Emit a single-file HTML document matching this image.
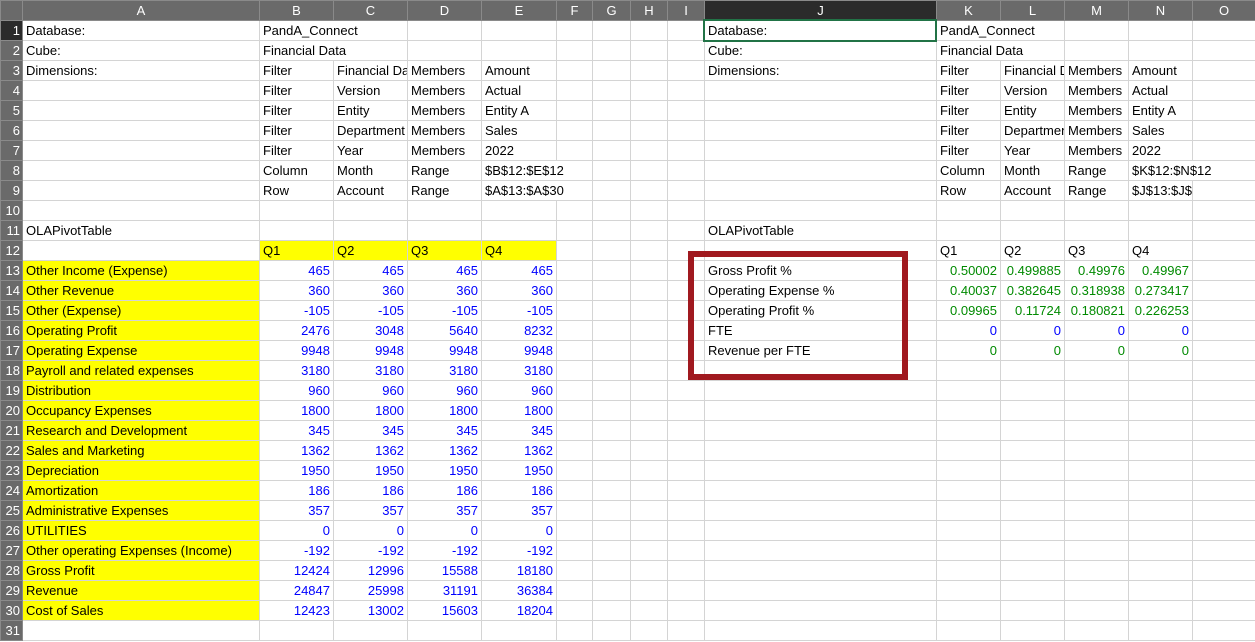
<!DOCTYPE html><html><head><meta charset="utf-8"><style>
body{margin:0;width:1255px;height:642px;overflow:hidden;background:#fff;font-family:"Liberation Sans",sans-serif;font-size:13px;position:relative}
table{border-collapse:collapse;table-layout:fixed;position:absolute;left:0;top:0;width:1255px}
td{height:19px;padding:0 3px;border:1px solid #d4d4d4;white-space:nowrap;overflow:hidden;color:#000;line-height:19px;text-overflow:clip}
tr.h td{background:#6a6a6a;color:#fff;text-align:center;border-color:#8a8a8a}
td.r{background:#6a6a6a;color:#fff;text-align:right;padding:0 2px 0 0;border-color:#8a8a8a}
td.sel{background:#2b2b2b!important}
.y{background:#ffff00}
.n{text-align:right;color:#0000ff}
.g{text-align:right;color:#008a00}
#box{position:absolute;left:688px;top:251px;width:208px;height:117px;border:6px solid #a0191f}
#cur{position:absolute;left:703px;top:19px;width:230px;height:19px;border:2px solid #217346}
</style></head><body>
<table>
<colgroup><col style="width:22px"><col style="width:237px"><col style="width:74px"><col style="width:74px"><col style="width:74px"><col style="width:75px"><col style="width:36px"><col style="width:38px"><col style="width:37px"><col style="width:37px"><col style="width:232px"><col style="width:64px"><col style="width:64px"><col style="width:64px"><col style="width:64px"><col style="width:63px"></colgroup>
<tr class="h"><td></td><td>A</td><td>B</td><td>C</td><td>D</td><td>E</td><td>F</td><td>G</td><td>H</td><td>I</td><td class="sel">J</td><td>K</td><td>L</td><td>M</td><td>N</td><td>O</td></tr>
<tr><td class="r sel">1</td><td>Database:</td><td colspan="2">PandA_Connect</td><td></td><td></td><td></td><td></td><td></td><td></td><td>Database:</td><td colspan="2">PandA_Connect</td><td></td><td></td><td></td></tr>
<tr><td class="r">2</td><td>Cube:</td><td colspan="2">Financial Data</td><td></td><td></td><td></td><td></td><td></td><td></td><td>Cube:</td><td colspan="2">Financial Data</td><td></td><td></td><td></td></tr>
<tr><td class="r">3</td><td>Dimensions:</td><td>Filter</td><td>Financial Data</td><td>Members</td><td>Amount</td><td></td><td></td><td></td><td></td><td>Dimensions:</td><td>Filter</td><td>Financial Data</td><td>Members</td><td>Amount</td><td></td></tr>
<tr><td class="r">4</td><td></td><td>Filter</td><td>Version</td><td>Members</td><td>Actual</td><td></td><td></td><td></td><td></td><td></td><td>Filter</td><td>Version</td><td>Members</td><td>Actual</td><td></td></tr>
<tr><td class="r">5</td><td></td><td>Filter</td><td>Entity</td><td>Members</td><td>Entity A</td><td></td><td></td><td></td><td></td><td></td><td>Filter</td><td>Entity</td><td>Members</td><td>Entity A</td><td></td></tr>
<tr><td class="r">6</td><td></td><td>Filter</td><td>Department</td><td>Members</td><td>Sales</td><td></td><td></td><td></td><td></td><td></td><td>Filter</td><td>Department</td><td>Members</td><td>Sales</td><td></td></tr>
<tr><td class="r">7</td><td></td><td>Filter</td><td>Year</td><td>Members</td><td>2022</td><td></td><td></td><td></td><td></td><td></td><td>Filter</td><td>Year</td><td>Members</td><td>2022</td><td></td></tr>
<tr><td class="r">8</td><td></td><td>Column</td><td>Month</td><td>Range</td><td colspan="2">$B$12:$E$12</td><td></td><td></td><td></td><td></td><td>Column</td><td>Month</td><td>Range</td><td colspan="2">$K$12:$N$12</td></tr>
<tr><td class="r">9</td><td></td><td>Row</td><td>Account</td><td>Range</td><td colspan="2">$A$13:$A$30</td><td></td><td></td><td></td><td></td><td>Row</td><td>Account</td><td>Range</td><td>$J$13:$J$17</td><td></td></tr>
<tr><td class="r">10</td><td></td><td></td><td></td><td></td><td></td><td></td><td></td><td></td><td></td><td></td><td></td><td></td><td></td><td></td><td></td></tr>
<tr><td class="r">11</td><td>OLAPivotTable</td><td></td><td></td><td></td><td></td><td></td><td></td><td></td><td></td><td>OLAPivotTable</td><td></td><td></td><td></td><td></td><td></td></tr>
<tr><td class="r">12</td><td></td><td class="y">Q1</td><td class="y">Q2</td><td class="y">Q3</td><td class="y">Q4</td><td></td><td></td><td></td><td></td><td></td><td>Q1</td><td>Q2</td><td>Q3</td><td>Q4</td><td></td></tr>
<tr><td class="r">13</td><td class="y">Other Income (Expense)</td><td class="n">465</td><td class="n">465</td><td class="n">465</td><td class="n">465</td><td></td><td></td><td></td><td></td><td>Gross Profit %</td><td class="g">0.50002</td><td class="g">0.499885</td><td class="g">0.49976</td><td class="g">0.49967</td><td></td></tr>
<tr><td class="r">14</td><td class="y">Other Revenue</td><td class="n">360</td><td class="n">360</td><td class="n">360</td><td class="n">360</td><td></td><td></td><td></td><td></td><td>Operating Expense %</td><td class="g">0.40037</td><td class="g">0.382645</td><td class="g">0.318938</td><td class="g">0.273417</td><td></td></tr>
<tr><td class="r">15</td><td class="y">Other (Expense)</td><td class="n">-105</td><td class="n">-105</td><td class="n">-105</td><td class="n">-105</td><td></td><td></td><td></td><td></td><td>Operating Profit %</td><td class="g">0.09965</td><td class="g">0.11724</td><td class="g">0.180821</td><td class="g">0.226253</td><td></td></tr>
<tr><td class="r">16</td><td class="y">Operating Profit</td><td class="n">2476</td><td class="n">3048</td><td class="n">5640</td><td class="n">8232</td><td></td><td></td><td></td><td></td><td>FTE</td><td class="n">0</td><td class="n">0</td><td class="n">0</td><td class="n">0</td><td></td></tr>
<tr><td class="r">17</td><td class="y">Operating Expense</td><td class="n">9948</td><td class="n">9948</td><td class="n">9948</td><td class="n">9948</td><td></td><td></td><td></td><td></td><td>Revenue per FTE</td><td class="g">0</td><td class="g">0</td><td class="g">0</td><td class="g">0</td><td></td></tr>
<tr><td class="r">18</td><td class="y">Payroll and related expenses</td><td class="n">3180</td><td class="n">3180</td><td class="n">3180</td><td class="n">3180</td><td></td><td></td><td></td><td></td><td></td><td></td><td></td><td></td><td></td><td></td></tr>
<tr><td class="r">19</td><td class="y">Distribution</td><td class="n">960</td><td class="n">960</td><td class="n">960</td><td class="n">960</td><td></td><td></td><td></td><td></td><td></td><td></td><td></td><td></td><td></td><td></td></tr>
<tr><td class="r">20</td><td class="y">Occupancy Expenses</td><td class="n">1800</td><td class="n">1800</td><td class="n">1800</td><td class="n">1800</td><td></td><td></td><td></td><td></td><td></td><td></td><td></td><td></td><td></td><td></td></tr>
<tr><td class="r">21</td><td class="y">Research and Development</td><td class="n">345</td><td class="n">345</td><td class="n">345</td><td class="n">345</td><td></td><td></td><td></td><td></td><td></td><td></td><td></td><td></td><td></td><td></td></tr>
<tr><td class="r">22</td><td class="y">Sales and Marketing</td><td class="n">1362</td><td class="n">1362</td><td class="n">1362</td><td class="n">1362</td><td></td><td></td><td></td><td></td><td></td><td></td><td></td><td></td><td></td><td></td></tr>
<tr><td class="r">23</td><td class="y">Depreciation</td><td class="n">1950</td><td class="n">1950</td><td class="n">1950</td><td class="n">1950</td><td></td><td></td><td></td><td></td><td></td><td></td><td></td><td></td><td></td><td></td></tr>
<tr><td class="r">24</td><td class="y">Amortization</td><td class="n">186</td><td class="n">186</td><td class="n">186</td><td class="n">186</td><td></td><td></td><td></td><td></td><td></td><td></td><td></td><td></td><td></td><td></td></tr>
<tr><td class="r">25</td><td class="y">Administrative Expenses</td><td class="n">357</td><td class="n">357</td><td class="n">357</td><td class="n">357</td><td></td><td></td><td></td><td></td><td></td><td></td><td></td><td></td><td></td><td></td></tr>
<tr><td class="r">26</td><td class="y">UTILITIES</td><td class="n">0</td><td class="n">0</td><td class="n">0</td><td class="n">0</td><td></td><td></td><td></td><td></td><td></td><td></td><td></td><td></td><td></td><td></td></tr>
<tr><td class="r">27</td><td class="y">Other operating Expenses (Income)</td><td class="n">-192</td><td class="n">-192</td><td class="n">-192</td><td class="n">-192</td><td></td><td></td><td></td><td></td><td></td><td></td><td></td><td></td><td></td><td></td></tr>
<tr><td class="r">28</td><td class="y">Gross Profit</td><td class="n">12424</td><td class="n">12996</td><td class="n">15588</td><td class="n">18180</td><td></td><td></td><td></td><td></td><td></td><td></td><td></td><td></td><td></td><td></td></tr>
<tr><td class="r">29</td><td class="y">Revenue</td><td class="n">24847</td><td class="n">25998</td><td class="n">31191</td><td class="n">36384</td><td></td><td></td><td></td><td></td><td></td><td></td><td></td><td></td><td></td><td></td></tr>
<tr><td class="r">30</td><td class="y">Cost of Sales</td><td class="n">12423</td><td class="n">13002</td><td class="n">15603</td><td class="n">18204</td><td></td><td></td><td></td><td></td><td></td><td></td><td></td><td></td><td></td><td></td></tr>
<tr><td class="r">31</td><td></td><td></td><td></td><td></td><td></td><td></td><td></td><td></td><td></td><td></td><td></td><td></td><td></td><td></td><td></td></tr>
</table>
<div id="cur"></div>
<div id="box"></div>
</body></html>
